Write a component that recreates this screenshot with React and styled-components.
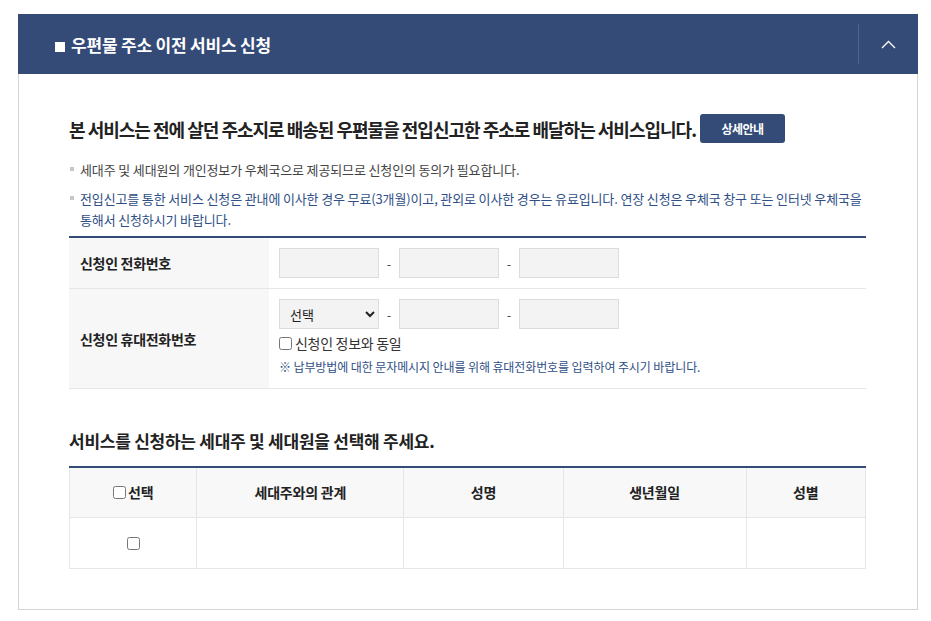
import React from "react";
import styled, { createGlobalStyle } from "styled-components";

const Global = createGlobalStyle`
  * { box-sizing: border-box; }
  body {
    margin: 0;
    background: #fff;
    font-family: "Noto Sans CJK KR", "Noto Sans", sans-serif;
    color: #333;
  }
`;

const Page = styled.div`
  padding: 14px 13px 12px 18px;
`;

const Panel = styled.section`
  width: 900px;
  border: 1px solid #d4d4d4;
  border-top: none;
`;

const PanelHeader = styled.header`
  height: 60px;
  margin: 0 -1px;
  background: #344b78;
  display: flex;
  align-items: center;
`;

const PanelTitle = styled.h2`
  flex: 1;
  margin: 0;
  padding-left: 37px;
  display: flex;
  align-items: center;
  gap: 6px;
  color: #fff;
  font-size: 17px;
  font-weight: 700;
  letter-spacing: -0.2px;
`;

const TitleMark = styled.span`
  width: 10px;
  height: 10px;
  background: #fff;
  margin-top: 5px;
`;

const ToggleButton = styled.button`
  width: 60px;
  height: 40px;
  border: none;
  border-left: 1px solid #52658c;
  background: transparent;
  padding: 0;
  display: flex;
  align-items: center;
  justify-content: center;
  cursor: pointer;
`;

const Body = styled.div`
  padding: 40px 51px 40px 50px;
`;

const Lead = styled.div`
  display: flex;
  align-items: center;
  gap: 4px;
`;

const LeadText = styled.h3`
  margin: 0;
  font-size: 18px;
  font-weight: 700;
  color: #222;
  letter-spacing: -1px;
`;

const DetailButton = styled.button`
  width: 85px;
  height: 29px;
  border: none;
  border-radius: 3px;
  background: #344b78;
  color: #fff;
  font-family: inherit;
  font-size: 12px;
  font-weight: 700;
  letter-spacing: -0.5px;
`;

const Notes = styled.ul`
  list-style: none;
  margin: 16px 0 0;
  padding: 0;
  display: flex;
  flex-direction: column;
  gap: 8px;
`;

const Note = styled.li`
  position: relative;
  padding-left: 11px;
  font-size: 13px;
  line-height: 21px;
  letter-spacing: -0.14px;
  color: ${(p) => (p.$blue ? "#2f4f86" : "#444")};
  &::before {
    content: "";
    position: absolute;
    left: 1px;
    top: 8px;
    width: 4px;
    height: 4px;
    background: #c8c8c8;
  }
`;

const FormTable = styled.div`
  margin-top: 6px;
  border-top: 2px solid #344b78;
`;

const FormRow = styled.div`
  display: grid;
  grid-template-columns: 200px 1fr;
  border-bottom: 1px solid #e6e6e6;
`;

const FormLabel = styled.div`
  background: #f7f7f7;
  padding-left: 11px;
  display: flex;
  align-items: center;
  font-size: 14px;
  font-weight: 700;
  color: #222;
  letter-spacing: -0.3px;
`;

const FormCell = styled.div`
  padding: 10px 10px ${(p) => p.$pb || 10}px;
  display: flex;
  flex-direction: column;
`;

const FieldLine = styled.div`
  display: flex;
  align-items: center;
`;

const TextField = styled.input`
  width: 100px;
  height: 30px;
  border: 1px solid #dcdcdc;
  background: #f3f3f3;
  padding: 0 8px;
  font-family: inherit;
  outline: none;
`;

const Select = styled.select`
  width: 100px;
  height: 30px;
  border: 1px solid #dcdcdc;
  background: #f3f3f3;
  padding: 0 6px;
  font-family: inherit;
  font-size: 13px;
  color: #222;
  border-radius: 0;
`;

const Dash = styled.span`
  width: 20px;
  text-align: center;
  color: #555;
  font-size: 13px;
`;

const CheckLine = styled.label`
  margin-top: 4px;
  height: 20px;
  display: flex;
  align-items: center;
  gap: 3px;
  font-size: 14px;
  color: #333;
  letter-spacing: -0.3px;
`;

const Check = styled.input`
  margin: 0;
  width: 13px;
  height: 13px;
`;

const Hint = styled.p`
  margin: 5px 0 0;
  font-size: 12px;
  line-height: 18px;
  color: #2f4f86;
  letter-spacing: -0.1px;
`;

const SectionTitle = styled.h3`
  margin: 40px 0 0;
  font-size: 17px;
  line-height: 24px;
  font-weight: 700;
  color: #222;
  letter-spacing: -0.25px;
`;

const Table = styled.table`
  margin-top: 13px;
  width: 100%;
  border-collapse: collapse;
  table-layout: fixed;
  border-top: 2px solid #344b78;
`;

const Th = styled.th`
  height: 50px;
  background: #f8f8f9;
  border: 1px solid #e6e6e6;
  border-top: none;
  font-size: 14px;
  font-weight: 700;
  color: #222;
  letter-spacing: -0.2px;
  padding: 0;
`;

const Td = styled.td`
  height: 51px;
  border: 1px solid #e6e6e6;
  text-align: center;
  padding: 0;
`;

const ThInner = styled.span`
  display: inline-flex;
  align-items: center;
  gap: 2px;
`;

const columns = [
  { w: "16%", label: "선택", check: true },
  { w: "26%", label: "세대주와의 관계" },
  { w: "20%", label: "성명" },
  { w: "23%", label: "생년월일" },
  { w: "15%", label: "성별" },
];

export default function App() {
  return (
    <Page>
      <Global />
      <Panel>
        <PanelHeader>
          <PanelTitle>
            <TitleMark />
            우편물 주소 이전 서비스 신청
          </PanelTitle>
          <ToggleButton aria-label="접기">
            <svg width="15" height="9" viewBox="0 0 15 9" fill="none">
              <path d="M1 8L7.5 1.5L14 8" stroke="#fff" strokeWidth="1.3" />
            </svg>
          </ToggleButton>
        </PanelHeader>
        <Body>
          <Lead>
            <LeadText>
              본 서비스는 전에 살던 주소지로 배송된 우편물을 전입신고한 주소로 배달하는 서비스입니다.
            </LeadText>
            <DetailButton>상세안내</DetailButton>
          </Lead>
          <Notes>
            <Note>세대주 및 세대원의 개인정보가 우체국으로 제공되므로 신청인의 동의가 필요합니다.</Note>
            <Note $blue>
              전입신고를 통한 서비스 신청은 관내에 이사한 경우 무료(3개월)이고, 관외로 이사한 경우는 유료입니다. 연장 신청은 우체국 창구 또는 인터넷 우체국을 통해서 신청하시기 바랍니다.
            </Note>
          </Notes>
          <FormTable>
            <FormRow>
              <FormLabel>신청인 전화번호</FormLabel>
              <FormCell>
                <FieldLine>
                  <TextField />
                  <Dash>-</Dash>
                  <TextField />
                  <Dash>-</Dash>
                  <TextField />
                </FieldLine>
              </FormCell>
            </FormRow>
            <FormRow>
              <FormLabel>신청인 휴대전화번호</FormLabel>
              <FormCell $pb={12}>
                <FieldLine>
                  <Select defaultValue="">
                    <option value="">선택</option>
                    <option>010</option>
                    <option>011</option>
                  </Select>
                  <Dash>-</Dash>
                  <TextField />
                  <Dash>-</Dash>
                  <TextField />
                </FieldLine>
                <CheckLine>
                  <Check type="checkbox" />
                  신청인 정보와 동일
                </CheckLine>
                <Hint>※ 납부방법에 대한 문자메시지 안내를 위해 휴대전화번호를 입력하여 주시기 바랍니다.</Hint>
              </FormCell>
            </FormRow>
          </FormTable>
          <SectionTitle>서비스를 신청하는 세대주 및 세대원을 선택해 주세요.</SectionTitle>
          <Table>
            <colgroup>
              {columns.map((c) => (
                <col key={c.label} style={{ width: c.w }} />
              ))}
            </colgroup>
            <thead>
              <tr>
                {columns.map((c) => (
                  <Th key={c.label}>
                    <ThInner>
                      {c.check && <Check type="checkbox" />}
                      {c.label}
                    </ThInner>
                  </Th>
                ))}
              </tr>
            </thead>
            <tbody>
              <tr>
                <Td>
                  <Check type="checkbox" />
                </Td>
                <Td />
                <Td />
                <Td />
                <Td />
              </tr>
            </tbody>
          </Table>
        </Body>
      </Panel>
    </Page>
  );
}
